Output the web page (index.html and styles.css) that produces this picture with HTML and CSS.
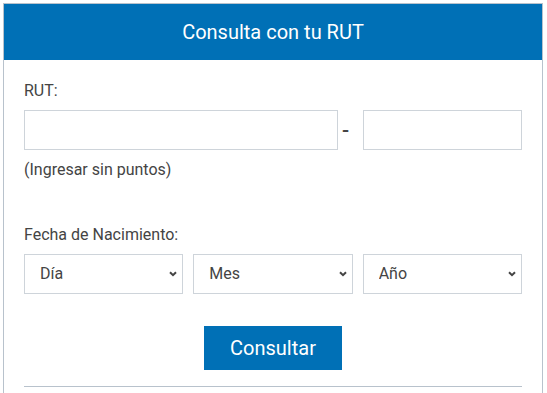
FILE: index.html
```html
<!DOCTYPE html>
<html lang="es">
<head>
    <meta charset="UTF-8">
    <title>Consulta con tu RUT</title>
    <link rel="stylesheet" href="styles.css">
</head>
<body>
    <!-- Tarjeta de consulta -->
    <div class="card">
        <div class="card-header">Consulta con tu RUT</div>

        <form class="card-body">
            <!-- RUT -->
            <div class="field field-rut">
                <label class="label" for="rut">RUT:</label>
                <div class="rut-row">
                    <input id="rut" class="input" type="text">
                    <span class="dash">-</span>
                    <input id="dv" class="input" type="text">
                </div>
                <p class="hint">(Ingresar sin puntos)</p>
            </div>

            <!-- Fecha de nacimiento -->
            <div class="field">
                <label class="label" for="dia">Fecha de Nacimiento:</label>
                <div class="date-row">
                    <div class="select-wrap">
                        <select id="dia" class="select"><option>Día</option></select>
                        <svg class="chevron" width="8" height="6" viewBox="0 0 8 6"><path d="M1 1.2l3 3 3-3" fill="none" stroke="#444" stroke-width="2"/></svg>
                    </div>
                    <div class="select-wrap">
                        <select class="select"><option>Mes</option></select>
                        <svg class="chevron" width="8" height="6" viewBox="0 0 8 6"><path d="M1 1.2l3 3 3-3" fill="none" stroke="#444" stroke-width="2"/></svg>
                    </div>
                    <div class="select-wrap">
                        <select class="select"><option>Año</option></select>
                        <svg class="chevron" width="8" height="6" viewBox="0 0 8 6"><path d="M1 1.2l3 3 3-3" fill="none" stroke="#444" stroke-width="2"/></svg>
                    </div>
                </div>
            </div>

            <div class="actions">
                <button type="button" class="btn">Consultar</button>
            </div>

            <hr class="divider">
        </form>
    </div>
</body>
</html>
```

FILE: styles.css
```css
/* base */
body {
    margin: 0;
    padding: 3px;
    font-family: Roboto, "Liberation Sans", sans-serif;
    font-size: 16px;
    line-height: 24px;
    color: #444;
    background: #fff;
}

/* tarjeta */
.card {
    width: 540px;
    box-sizing: border-box;
    border: 1px solid #b8c2cc;
    border-bottom: none;
    min-height: 400px;
}

.card-header {
    height: 56px;
    line-height: 56px;
    background: #0070b6;
    color: #fff;
    font-size: 20px;
    text-align: center;
}

.card-body {
    padding: 19px 20px 0;
}

/* campos */
.field-rut {
    margin-bottom: 41px;
}

.label {
    display: block;
    margin-bottom: 7px;
}

.rut-row {
    display: grid;
    grid-template-columns: 1fr 25px 159px;
    align-items: center;
}

.input {
    height: 40px;
    box-sizing: border-box;
    border: 1px solid #ced4da;
    padding: 0 12px;
    font: inherit;
    color: #444;
    min-width: 0;
}

.dash {
    padding-left: 4px;
    font-size: 21px;
    font-weight: 500;
}

.hint {
    margin: 8px 0 0;
}

/* selects de fecha */
.date-row {
    display: grid;
    grid-template-columns: 1fr 1fr 1fr;
    gap: 10px;
}

.select-wrap {
    position: relative;
}

.select {
    appearance: none;
    -webkit-appearance: none;
    width: 100%;
    height: 40px;
    box-sizing: border-box;
    border: 1px solid #ced4da;
    border-radius: 0;
    background: #fff;
    padding: 0 24px 0 15px;
    font: inherit;
    color: #444;
}

.chevron {
    position: absolute;
    right: 6px;
    top: 17px;
    pointer-events: none;
}

/* boton */
.actions {
    display: flex;
    justify-content: center;
    margin-top: 32px;
}

.btn {
    height: 44px;
    padding: 0 26px;
    border: none;
    background: #0070b6;
    color: #fff;
    font-family: inherit;
    font-size: 20px;
    cursor: pointer;
}

.divider {
    margin: 16px 0 0;
    border: none;
    border-top: 1px solid #b8c2cc;
}
```
